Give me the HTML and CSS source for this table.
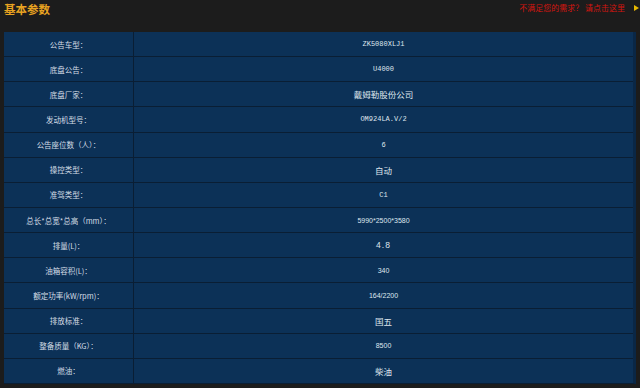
FILE: index.html
```html
<!DOCTYPE html>
<html>
<head>
<meta charset="utf-8">
<link rel="stylesheet" href="styles.css">
</head>
<body>
<div class="page">
  <div class="head">
    <div class="title">基本参数</div>
    <div class="help"><span class="help-text">不满足您的需求？ 请点击这里</span><span class="arrow"></span></div>
  </div>
  <div class="table">
    <div class="row"><div class="k">公告车型：</div><div class="v serif">ZK5080XLJ1</div></div>
    <div class="row"><div class="k">底盘公告：</div><div class="v serif">U4000</div></div>
    <div class="row"><div class="k">底盘厂家：</div><div class="v cjk">戴姆勒股份公司</div></div>
    <div class="row"><div class="k">发动机型号：</div><div class="v serif">OM924LA.V/2</div></div>
    <div class="row"><div class="k">公告座位数（人）：</div><div class="v serif">6</div></div>
    <div class="row"><div class="k">操控类型：</div><div class="v cjk">自动</div></div>
    <div class="row"><div class="k">准驾类型：</div><div class="v serif">C1</div></div>
    <div class="row"><div class="k">总长*总宽*总高（mm）：</div><div class="v">5990*2500*3580</div></div>
    <div class="row"><div class="k">排量(L)：</div><div class="v big">4.8</div></div>
    <div class="row"><div class="k">油箱容积(L)：</div><div class="v">340</div></div>
    <div class="row"><div class="k">额定功率(kW/rpm)：</div><div class="v">164/2200</div></div>
    <div class="row"><div class="k">排放标准：</div><div class="v cjk">国五</div></div>
    <div class="row"><div class="k">整备质量（KG）：</div><div class="v">8500</div></div>
    <div class="row"><div class="k">燃油：</div><div class="v cjk">柴油</div></div>
  </div>
</div>
</body>
</html>
```
FILE: styles.css
```css
html, body {
  margin: 0;
  padding: 0;
  background: #1c1c1c;
}
.page {
  width: 640px;
  height: 388px;
  overflow: hidden;
  font-family: "Noto Sans CJK SC", "Liberation Sans", sans-serif;
}
.head {
  height: 32px;
  display: flex;
  justify-content: space-between;
  align-items: flex-start;
  padding: 0 0 0 4px;
}
.title {
  color: #e8a321;
  font-size: 11.5px;
  font-weight: bold;
  line-height: 14px;
  padding-top: 2px;
}
.help {
  display: flex;
  align-items: center;
  padding-top: 3px;
}
.help-text {
  color: #d2150f;
  font-size: 8px;
  line-height: 10px;
}
.arrow {
  width: 0;
  height: 0;
  border-top: 3px solid transparent;
  border-bottom: 3px solid transparent;
  border-left: 5px solid #e6b800;
  margin: 0 1px 0 9px;
}
.table {
  margin-left: 4px;
  width: 629px;
  border-right: 3px solid #0a2746;
  display: grid;
  grid-auto-rows: 24.15px;
  row-gap: 1px;
  background: #0a1e34;
  border-bottom: 1px solid #0a1e34;
}
.row {
  display: grid;
  grid-template-columns: 129px 1fr;
  column-gap: 1px;
  background: #0a1e34;
}
.k, .v {
  background: #0c3157;
  display: flex;
  align-items: center;
  justify-content: center;
  color: #d4dde6;
  font-size: 7.5px;
  white-space: nowrap;
}
.v {
  color: #dfe6ee;
  font-family: "Liberation Sans", "Noto Sans CJK SC", sans-serif;
  font-size: 7px;
}
.v.serif {
  font-family: "Liberation Mono", monospace;
  font-size: 7px;
}
.v.cjk {
  font-family: "Noto Sans CJK SC", sans-serif;
  font-size: 8.5px;
}
.v.big {
  font-size: 8.5px;
  letter-spacing: 1px;
}
```
